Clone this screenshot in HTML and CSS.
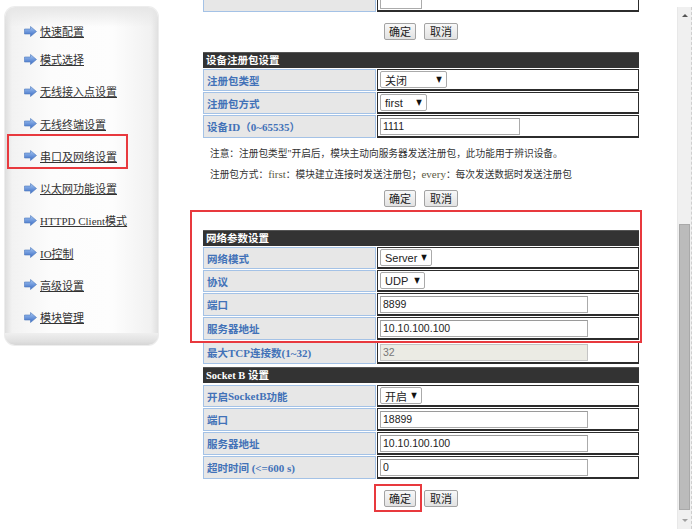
FILE: index.html
```html
<!DOCTYPE html>
<html lang="zh-CN">
<head>
<meta charset="utf-8">
<title>串口及网络设置</title>
<link rel="stylesheet" href="styles.css">
</head>
<body>
<div class="page">
  <nav class="sidebar">
    <ul class="menu">
      <li><a href="#"><svg viewBox="0 0 13 11"><defs><linearGradient id="a1" x1="0" y1="0" x2="0" y2="1"><stop offset="0" stop-color="#a4c6f4"/><stop offset="1" stop-color="#3b6cc4"/></linearGradient></defs><path d="M0.5 3H6.5V0.5L12.5 5.5L6.5 10.5V8H0.5Z" fill="url(#a1)" stroke="#4d78bd" stroke-width="0.6"/></svg><span>快速配置</span></a></li>
      <li><a href="#"><svg viewBox="0 0 13 11"><defs><linearGradient id="a2" x1="0" y1="0" x2="0" y2="1"><stop offset="0" stop-color="#a4c6f4"/><stop offset="1" stop-color="#3b6cc4"/></linearGradient></defs><path d="M0.5 3H6.5V0.5L12.5 5.5L6.5 10.5V8H0.5Z" fill="url(#a2)" stroke="#4d78bd" stroke-width="0.6"/></svg><span>模式选择</span></a></li>
      <li><a href="#"><svg viewBox="0 0 13 11"><defs><linearGradient id="a3" x1="0" y1="0" x2="0" y2="1"><stop offset="0" stop-color="#a4c6f4"/><stop offset="1" stop-color="#3b6cc4"/></linearGradient></defs><path d="M0.5 3H6.5V0.5L12.5 5.5L6.5 10.5V8H0.5Z" fill="url(#a3)" stroke="#4d78bd" stroke-width="0.6"/></svg><span>无线接入点设置</span></a></li>
      <li><a href="#"><svg viewBox="0 0 13 11"><defs><linearGradient id="a4" x1="0" y1="0" x2="0" y2="1"><stop offset="0" stop-color="#a4c6f4"/><stop offset="1" stop-color="#3b6cc4"/></linearGradient></defs><path d="M0.5 3H6.5V0.5L12.5 5.5L6.5 10.5V8H0.5Z" fill="url(#a4)" stroke="#4d78bd" stroke-width="0.6"/></svg><span>无线终端设置</span></a></li>
      <li><a href="#"><svg viewBox="0 0 13 11"><defs><linearGradient id="a5" x1="0" y1="0" x2="0" y2="1"><stop offset="0" stop-color="#a4c6f4"/><stop offset="1" stop-color="#3b6cc4"/></linearGradient></defs><path d="M0.5 3H6.5V0.5L12.5 5.5L6.5 10.5V8H0.5Z" fill="url(#a5)" stroke="#4d78bd" stroke-width="0.6"/></svg><span>串口及网络设置</span></a></li>
      <li><a href="#"><svg viewBox="0 0 13 11"><defs><linearGradient id="a6" x1="0" y1="0" x2="0" y2="1"><stop offset="0" stop-color="#a4c6f4"/><stop offset="1" stop-color="#3b6cc4"/></linearGradient></defs><path d="M0.5 3H6.5V0.5L12.5 5.5L6.5 10.5V8H0.5Z" fill="url(#a6)" stroke="#4d78bd" stroke-width="0.6"/></svg><span>以太网功能设置</span></a></li>
      <li><a href="#"><svg viewBox="0 0 13 11"><defs><linearGradient id="a7" x1="0" y1="0" x2="0" y2="1"><stop offset="0" stop-color="#a4c6f4"/><stop offset="1" stop-color="#3b6cc4"/></linearGradient></defs><path d="M0.5 3H6.5V0.5L12.5 5.5L6.5 10.5V8H0.5Z" fill="url(#a7)" stroke="#4d78bd" stroke-width="0.6"/></svg><span>HTTPD Client模式</span></a></li>
      <li><a href="#"><svg viewBox="0 0 13 11"><defs><linearGradient id="a8" x1="0" y1="0" x2="0" y2="1"><stop offset="0" stop-color="#a4c6f4"/><stop offset="1" stop-color="#3b6cc4"/></linearGradient></defs><path d="M0.5 3H6.5V0.5L12.5 5.5L6.5 10.5V8H0.5Z" fill="url(#a8)" stroke="#4d78bd" stroke-width="0.6"/></svg><span>IO控制</span></a></li>
      <li><a href="#"><svg viewBox="0 0 13 11"><defs><linearGradient id="a9" x1="0" y1="0" x2="0" y2="1"><stop offset="0" stop-color="#a4c6f4"/><stop offset="1" stop-color="#3b6cc4"/></linearGradient></defs><path d="M0.5 3H6.5V0.5L12.5 5.5L6.5 10.5V8H0.5Z" fill="url(#a9)" stroke="#4d78bd" stroke-width="0.6"/></svg><span>高级设置</span></a></li>
      <li><a href="#"><svg viewBox="0 0 13 11"><defs><linearGradient id="a10" x1="0" y1="0" x2="0" y2="1"><stop offset="0" stop-color="#a4c6f4"/><stop offset="1" stop-color="#3b6cc4"/></linearGradient></defs><path d="M0.5 3H6.5V0.5L12.5 5.5L6.5 10.5V8H0.5Z" fill="url(#a10)" stroke="#4d78bd" stroke-width="0.6"/></svg><span>模块管理</span></a></li>
    </ul>
    <div class="sidebar-foot"></div>
    <span class="mark mark-menu"></span>
  </nav>

  <main class="main">
    <div class="tbl tbl-partial">
      <div class="lbl t"></div>
      <div class="val t"><input class="inp w42" type="text" value=""></div>
    </div>
    <div class="btns"><button class="btn">确定</button><button class="btn btn-c">取消</button></div>

    <div class="tbl sec1">
      <div class="hdr">设备注册包设置</div>
      <div class="lbl">注册包类型</div>
      <div class="val"><span class="sel w67">关闭<i>▼</i></span></div>
      <div class="lbl">注册包方式</div>
      <div class="val"><span class="sel w47">first<i>▼</i></span></div>
      <div class="lbl t">设备<b>ID</b>（<b>0~65535</b>）</div>
      <div class="val t"><input class="inp w140" type="text" value="1111"></div>
    </div>

    <div class="notes">
      <p>注意：注册包类型"开启后，模块主动向服务器发送注册包，此功能用于辨识设备。</p>
      <p>注册包方式：<em>first</em>：模块建立连接时发送注册包；<em>every</em>：每次发送数据时发送注册包</p>
    </div>
    <div class="btns btns2"><button class="btn">确定</button><button class="btn btn-c">取消</button></div>

    <div class="tbl sec2">
      <div class="hdr">网络参数设置</div>
      <div class="lbl">网络模式</div>
      <div class="val"><span class="sel w52">Server<i>▼</i></span></div>
      <div class="lbl">协议</div>
      <div class="val"><span class="sel w45">UDP<i>▼</i></span></div>
      <div class="lbl t">端口</div>
      <div class="val t"><input class="inp" type="text" value="8899"></div>
      <div class="lbl t">服务器地址</div>
      <div class="val t"><input class="inp" type="text" value="10.10.100.100"></div>
      <div class="lbl t">最大<b>TCP</b>连接数<b>(1~32)</b></div>
      <div class="val t"><input class="inp" type="text" value="32" disabled></div>

      <div class="hdr hdr-b">Socket B 设置</div>
      <div class="lbl">开启<b>SocketB</b>功能</div>
      <div class="val"><span class="sel w42">开启<i>▼</i></span></div>
      <div class="lbl t">端口</div>
      <div class="val t"><input class="inp" type="text" value="18899"></div>
      <div class="lbl t">服务器地址</div>
      <div class="val t"><input class="inp" type="text" value="10.10.100.100"></div>
      <div class="lbl t">超时时间 <b>(&lt;=600 s)</b></div>
      <div class="val t"><input class="inp" type="text" value="0"></div>

      <span class="mark mark-net"></span>
    </div>

    <div class="btns btns3"><button class="btn">确定</button><button class="btn btn-c">取消</button><span class="mark mark-ok"></span></div>
  </main>

  <div class="vscroll">
    <div class="sb-btn"><span class="tri-up"></span></div>
    <div class="sb-track"><div class="sb-thumb"></div></div>
    <div class="sb-btn"><span class="tri-down"></span></div>
  </div>
</div>
</body>
</html>
```

FILE: styles.css
```css
* { box-sizing: border-box; }
html, body { margin: 0; padding: 0; background: #fff; }
body {
  font-family: "Liberation Serif", "Noto Sans CJK SC", serif;
  color: #333;
  overflow: hidden;
}
p { margin: 0; }

.page {
  display: flex;
  align-items: flex-start;
  width: 692px;
  height: 529px;
  overflow: hidden;
}

/* ---------- sidebar ---------- */
.sidebar {
  position: relative;
  flex: none;
  margin: 7px 0 0 5px;
  width: 153px;
  height: 338px;
  border-radius: 10px;
  display: flex;
  flex-direction: column;
  background:
    linear-gradient(to bottom, #e6e6e6 0, rgba(255,255,255,0) 20px),
    linear-gradient(to right, #dedede 0, #f2f2f2 7px, #fcfcfc 30%, #fdfdfd 70%, #f1f1f1 calc(100% - 7px), #e0e0e0 100%);
  box-shadow: 0 0 0 1px #ededed;
}
.menu {
  list-style: none;
  margin: 0;
  padding: 12px 0 0 19px;
  flex: 1;
}
.menu li {
  height: 32.25px;
  display: flex;
  align-items: center;
}
.menu li:first-child { height: 24px; }
.menu a {
  display: flex;
  align-items: center;
  gap: 3px;
  color: #333;
  font-size: 11px;
  text-decoration: none;
}
.menu a span { text-decoration: underline; }
.menu svg { width: 13px; height: 11px; flex: none; }
.sidebar-foot {
  height: 17px;
  border-radius: 0 0 10px 10px;
  background: linear-gradient(to bottom, #efefef, #e0e0e0 70%, #d6d6d6);
}

/* ---------- annotation marks ---------- */
.mark {
  position: absolute;
  border: 2px solid #e8393e;
  pointer-events: none;
}
.mark-menu { left: 2px; top: 127px; width: 121px; height: 35px; }
.mark-net { left: -13px; top: -20px; width: 452px; height: 133px; }
.mark-ok { left: 171px; top: -6px; width: 48px; height: 28px; }

/* ---------- main ---------- */
.main {
  position: relative;
  flex: none;
  margin-left: 45px;
  width: 436px;
  display: flex;
  flex-direction: column;
}
.tbl {
  position: relative;
  display: grid;
  grid-template-columns: 173px 262px;
  column-gap: 1px;
  row-gap: 1px;
}
.tbl-partial { margin-top: -11px; }
.sec1 { margin-top: 12px; }
.sec2 { margin-top: 23px; }

.hdr {
  grid-column: 1 / -1;
  height: 16px;
  background: #333;
  color: #fff;
  font-weight: bold;
  font-size: 10.5px;
  line-height: 15px;
  padding-left: 3px;
  border-top: 1px solid #555;
}
.hdr-b { margin-top: 2px; margin-bottom: 1px; }

.lbl {
  height: 22px;
  background: #e7e7e7;
  border: 1px solid #a4c2e6;
  color: #4272b8;
  font-weight: bold;
  font-size: 10.5px;
  display: flex;
  align-items: center;
  padding-left: 3px;
  white-space: pre;
}
.lbl b { font-size: 11px; }
.val {
  height: 22px;
  background: #fff;
  border: 1px solid #2c2c2c;
  border-bottom-width: 2px;
  display: flex;
  align-items: center;
  padding-left: 2px;
}
.lbl.t, .val.t { height: 23px; }

.inp {
  width: 208px;
  height: 17px;
  margin: 0;
  padding: 0 2px;
  border: 1px solid #ababab;
  border-top-color: #9a9a9a;
  background: #fff;
  color: #222;
  font: 10.5px "Liberation Sans", "Noto Sans CJK SC", sans-serif;
  outline: none;
}
.inp:disabled { background: #ebebe4; color: #777; border-color: #c4c4c4; }
.w42 { width: 42px; }
.w140 { width: 140px; }

.sel {
  display: inline-flex;
  align-items: center;
  justify-content: space-between;
  height: 17px;
  padding: 0 4px 0 4px;
  border: 1px solid #aaa;
  border-radius: 2px;
  background: #fff;
  color: #222;
  font: 11px "Liberation Sans", "Noto Sans CJK SC", sans-serif;
}
.sel i {
  font-style: normal;
  font-family: "DejaVu Sans", sans-serif;
  font-size: 8px;
  color: #111;
  transform: scaleX(0.9);
}
.sel.w67 { width: 67px; }
.sel.w47 { width: 47px; }
.sel.w52 { width: 52px; }
.sel.w45 { width: 45px; }
.sel.w42 { width: 42px; }

/* ---------- buttons ---------- */
.btns {
  position: relative;
  display: flex;
  justify-content: center;
  gap: 8px;
  margin-top: 11px;
}
.btns2 { margin-top: 5px; }
.btn {
  width: 32px;
  height: 17px;
  padding: 0;
  border: 1px solid #a3a3a3;
  border-radius: 2px;
  background: linear-gradient(to bottom, #f8f8f8, #e2e2e2);
  color: #222;
  font: 11px "Noto Sans CJK SC", sans-serif;
  line-height: 15px;
}
.btn-c { width: 34px; }

/* ---------- notes ---------- */
.notes {
  margin-top: 6px;
  padding-left: 7px;
  font-size: 9.7px;
  line-height: 20px;
  color: #333;
}
.notes em {
  font-style: normal;
  color: #5c5b45;
  font-size: 11px;
}

/* ---------- scrollbar ---------- */
.vscroll {
  margin-left: auto;
  margin-top: 7px;
  width: 15px;
  height: 522px;
  background: #f0f0f0;
  border-left: 1px solid #e8e8e8;
  border-right: 1px dashed #cfcfcf;
  display: flex;
  flex-direction: column;
  align-items: center;
}
.sb-btn {
  height: 17px;
  width: 100%;
  display: flex;
  align-items: center;
  justify-content: center;
  flex: none;
}
.tri-up {
  width: 0; height: 0;
  border-left: 3px solid transparent;
  border-right: 3px solid transparent;
  border-bottom: 3px solid #555;
}
.tri-down {
  width: 0; height: 0;
  border-left: 3px solid transparent;
  border-right: 3px solid transparent;
  border-top: 3px solid #a0a0a0;
}
.sb-track {
  flex: 1;
  width: 100%;
  display: flex;
  flex-direction: column;
  align-items: center;
  padding-top: 200px;
}
.sb-thumb {
  width: 11px;
  height: 286px;
  background: #bbb;
  border: 1px solid #a9a9a9;
}
```
